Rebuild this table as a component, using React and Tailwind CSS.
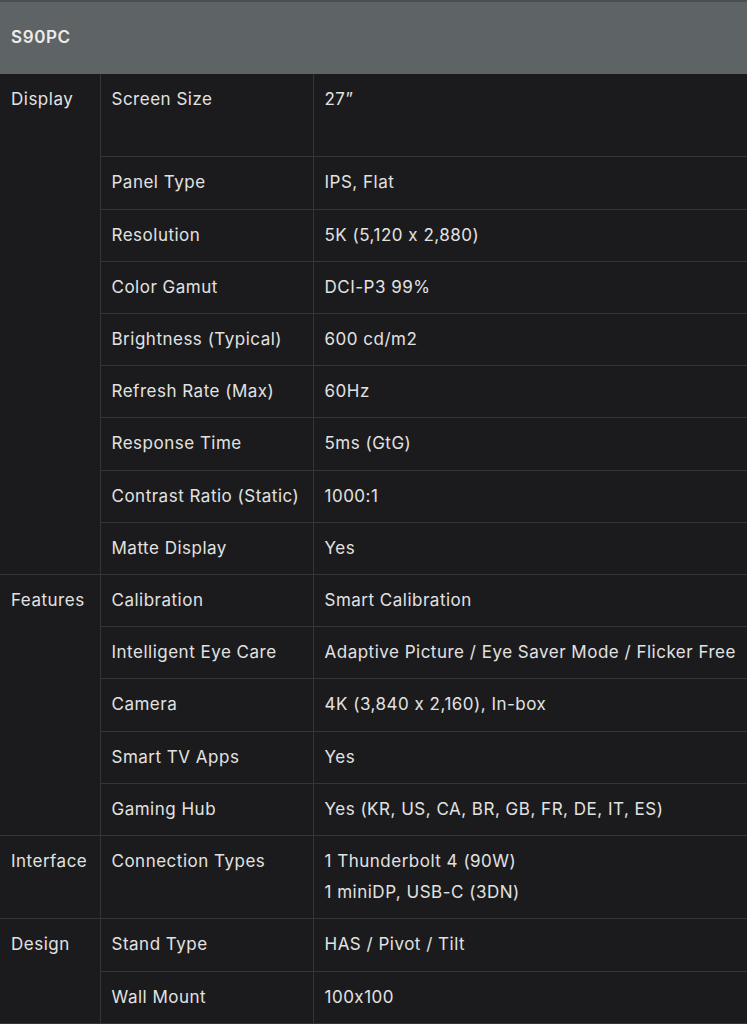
const groups = [
    {
        name: "Display",
        rows: [
            ["Screen Size", ["27\u201D", ""]],
            ["Panel Type", ["IPS, Flat"]],
            ["Resolution", ["5K (5,120 x 2,880)"]],
            ["Color Gamut", ["DCI-P3 99%"]],
            ["Brightness (Typical)", ["600 cd/m2"]],
            ["Refresh Rate (Max)", ["60Hz"]],
            ["Response Time", ["5ms (GtG)"]],
            ["Contrast Ratio (Static)", ["1000:1"]],
            ["Matte Display", ["Yes"]],
        ],
    },
    {
        name: "Features",
        rows: [
            ["Calibration", ["Smart Calibration"]],
            ["Intelligent Eye Care", ["Adaptive Picture / Eye Saver Mode / Flicker Free"]],
            ["Camera", ["4K (3,840 x 2,160), In-box"]],
            ["Smart TV Apps", ["Yes"]],
            ["Gaming Hub", ["Yes (KR, US, CA, BR, GB, FR, DE, IT, ES)"]],
        ],
    },
    {
        name: "Interface",
        rows: [["Connection Types", ["1 Thunderbolt 4 (90W)", "1 miniDP, USB-C (3DN)"]]],
    },
    {
        name: "Design",
        rows: [
            ["Stand Type", ["HAS / Pivot / Tilt"]],
            ["Wall Mount", ["100x100"]],
        ],
    },
];

export default function App() {
    return (
        <div className="w-[747px] min-h-[1024px] bg-[#1b1b1d] font-['Inter','Noto_Sans',sans-serif] text-[#e2e2e2]">
            <table className="w-full border-collapse text-[17px] font-normal leading-[31.2px] tracking-[0.5px]">
                <thead>
                    <tr>
                        <th
                            colSpan={3}
                            className="h-[73px] border-t-2 border-[#4a4f51] bg-[#5e6466] px-[11px] text-left text-[17px] font-semibold tracking-[0.6px] text-[#ececec]"
                        >
                            S90PC
                        </th>
                    </tr>
                </thead>
                <tbody>
                    {groups.map((g) =>
                        g.rows.map(([label, value], i) => (
                            <tr key={g.name + label} className="border-b border-[#333537]">
                                {i === 0 && (
                                    <td
                                        rowSpan={g.rows.length}
                                        className="w-[100px] border-r border-[#333537] px-[11px] py-[10px] align-top"
                                    >
                                        {g.name}
                                    </td>
                                )}
                                <td className="w-[213px] border-r border-[#333537] px-[11px] py-[10px] align-top whitespace-nowrap">
                                    {label}
                                </td>
                                <td className="px-[11px] py-[10px] align-top whitespace-nowrap">
                                    {value.map((line, j) => (
                                        <div key={j} className="h-[31.2px]">
                                            {line}
                                        </div>
                                    ))}
                                </td>
                            </tr>
                        ))
                    )}
                </tbody>
            </table>
        </div>
    );
}
